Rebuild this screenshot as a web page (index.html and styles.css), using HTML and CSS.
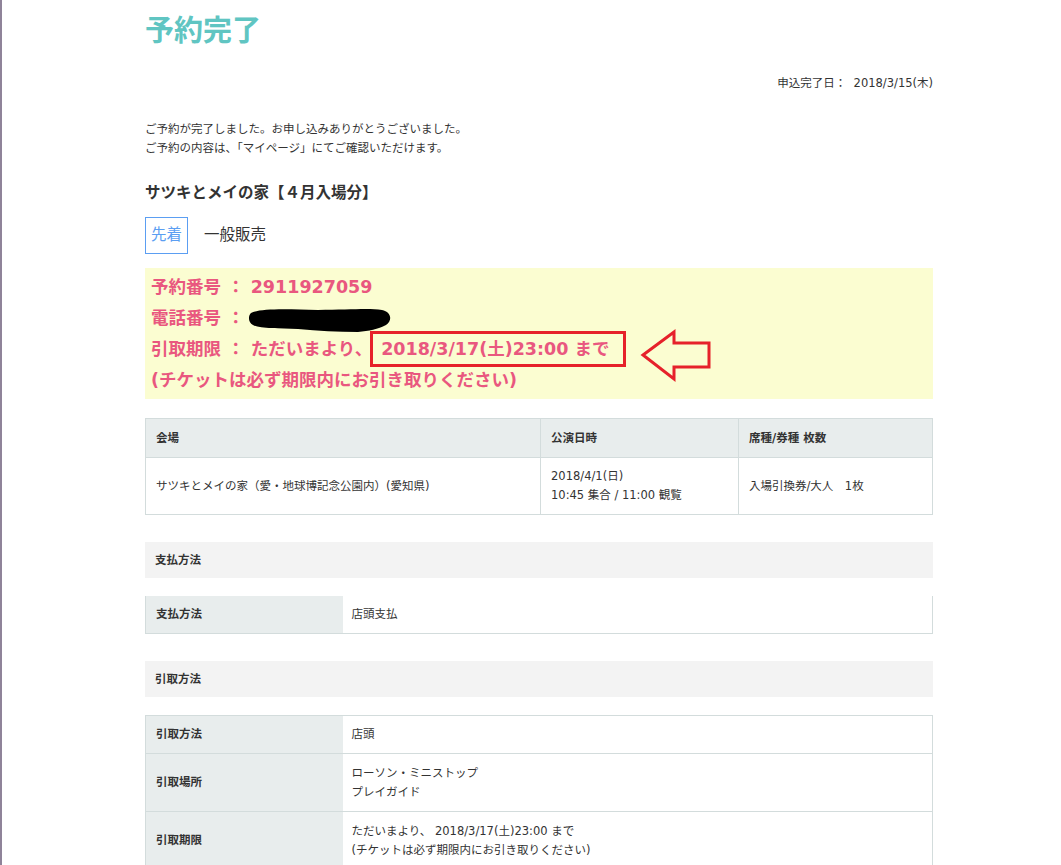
FILE: index.html
```html
<!DOCTYPE html>
<html lang="ja">
<head>
<meta charset="utf-8">
<title>予約完了</title>
<link rel="stylesheet" href="styles.css">
</head>
<body>
<div class="page">
  <h1 class="title">予約完了</h1>
  <p class="applied">申込完了日：&nbsp; 2018/3/15(木)</p>
  <p class="lead">ご予約が完了しました。お申し込みありがとうございました。<br>ご予約の内容は、「マイページ」にてご確認いただけます。</p>
  <h2 class="event">サツキとメイの家【４月入場分】</h2>
  <div class="tabs">
    <span class="tab tab-active">先着</span>
    <span class="tab">一般販売</span>
  </div>
  <div class="notice">
    <div class="notice-line">予約番号 ： 2911927059</div>
    <div class="notice-line">電話番号 ：</div>
    <div class="notice-line">引取期限 ： ただいまより、<span class="mark">2018/3/17(土)23:00 まで</span></div>
    <div class="notice-line">(チケットは必ず期限内にお引き取りください)</div>
    <svg class="redact" width="146" height="28" viewBox="0 0 146 28"><path d="M3,7 C12,2 40,3 70,4 C100,4 120,2 134,4 C143,6 145,14 138,19 C130,23 121,25 110,26 C90,26 70,25 50,23 C30,22 12,23 5,19 C0,16 0,10 3,7 Z" fill="#000"/></svg>
    <svg class="arrow" width="76" height="56" viewBox="0 0 76 56"><polygon points="5,27 36,4 36,15 71,15 71,39 36,39 36,51" fill="none" stroke="#e6212a" stroke-width="3" stroke-linejoin="miter"/></svg>
  </div>

  <table class="grid grid-main">
    <thead>
      <tr><th class="c1">会場</th><th class="c2">公演日時</th><th class="c3">席種/券種 枚数</th></tr>
    </thead>
    <tbody>
      <tr><td>サツキとメイの家（愛・地球博記念公園内）(愛知県)</td><td>2018/4/1(日)<br>10:45 集合 / 11:00 観覧</td><td>入場引換券/大人　1枚</td></tr>
    </tbody>
  </table>

  <div class="section">支払方法</div>
  <table class="grid grid-kv grid-notop">
    <tr><th>支払方法</th><td>店頭支払</td></tr>
  </table>

  <div class="section">引取方法</div>
  <table class="grid grid-kv">
    <tr class="r-short"><th>引取方法</th><td>店頭</td></tr>
    <tr><th>引取場所</th><td>ローソン・ミニストップ<br>プレイガイド</td></tr>
    <tr><th>引取期限</th><td>ただいまより、 2018/3/17(土)23:00 まで<br>(チケットは必ず期限内にお引き取りください)</td></tr>
  </table>
</div>
</body>
</html>
```

FILE: styles.css
```css
html, body {
  margin: 0;
  padding: 0;
  background: #ffffff;
}
body {
  border-left: 2px solid #8f8399;
  min-height: 865px;
  box-sizing: border-box;
  font-family: "DejaVu Sans", "Noto Sans CJK JP", sans-serif;
  color: #333333;
  font-size: 11.5px;
}
.page {
  width: 788px;
  margin-left: 143px;
}
.title {
  margin: 0;
  padding-top: 8px;
  font-family: "Noto Sans CJK JP", sans-serif;
  font-size: 29px;
  line-height: 40px;
  font-weight: 700;
  color: #60c5c2;
}
.applied {
  margin: 26px 0 0;
  text-align: right;
  font-size: 11.5px;
  line-height: 19px;
}
.lead {
  margin: 27px 0 0;
  font-size: 11.5px;
  line-height: 19px;
}
.event {
  margin: 24px 0 0;
  font-size: 15.5px;
  line-height: 22px;
  font-weight: 700;
}
.tabs {
  margin-top: 13px;
  display: flex;
  align-items: center;
  gap: 16px;
}
.tab {
  font-size: 15.5px;
  line-height: 35px;
  color: #333333;
}
.tab-active {
  border: 1px solid #5b9ef2;
  color: #5b9ef2;
  padding: 0 5px;
}
.notice {
  position: relative;
  margin-top: 14px;
  background: #fbfdd1;
  padding: 4px 6px 3px;
  color: #e9577f;
  font-weight: 700;
  font-size: 17.5px;
  line-height: 31px;
}
.mark {
  border: 3px solid #e6212a;
  padding: 5px 14px 5px 8px;
  margin-left: -2px;
}
.redact {
  position: absolute;
  left: 103px;
  top: 38px;
}
.arrow {
  position: absolute;
  left: 493px;
  top: 60px;
}
.grid {
  width: 788px;
  border-collapse: collapse;
  table-layout: fixed;
  margin-top: 18px;
  font-size: 11.5px;
  line-height: 19px;
}
.grid-main {
  margin-top: 19px;
}
.grid th, .grid td {
  border: 1px solid #d3dcdc;
  text-align: left;
  vertical-align: middle;
}
.grid th {
  background: #e8eded;
  font-weight: 700;
  font-size: 11.5px;
}
.grid-main th {
  height: 38px;
  padding: 0 10px;
}
.grid-main td {
  height: 56px;
  padding: 0 10px;
  background: #ffffff;
}
.grid-main .c1 { width: 374px; }
.grid-main .c2 { width: 177px; }
.grid-kv th {
  width: 197px;
  padding: 0 10px;
  height: 37px;
  box-sizing: border-box;
}
.grid-kv td {
  padding: 0 9px;
  height: 57px;
}
.grid-kv .r-short th,
.grid-kv .r-short td,
.grid-notop th,
.grid-notop td {
  height: 37px;
}
.grid-notop tr:first-child th,
.grid-notop tr:first-child td {
  border-top: none;
}
.grid-kv th { border-right: none; }
.grid-kv td { border-left: none; }
.section {
  margin-top: 27px;
  background: #f3f3f3;
  height: 36px;
  line-height: 36px;
  padding-left: 10px;
  font-weight: 700;
  font-size: 11.5px;
}
.section + .grid { margin-top: 18px; }
```
